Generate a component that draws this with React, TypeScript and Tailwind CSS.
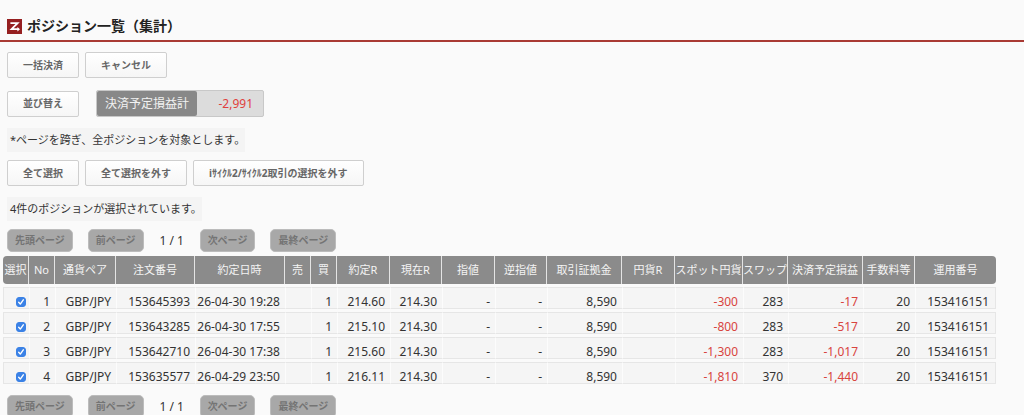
import { clsx } from 'clsx';

const columns = [
  { label: '選択', width: 'w-[26px]' },
  { label: 'No', width: 'w-[26px]' },
  { label: '通貨ペア', width: 'w-[61px]' },
  { label: '注文番号', width: 'w-[79px]' },
  { label: '約定日時', width: 'w-[90px]' },
  { label: '売', width: 'w-[26px]' },
  { label: '買', width: 'w-[26px]' },
  { label: '約定R', width: 'w-[53px]' },
  { label: '現在R', width: 'w-[52px]' },
  { label: '指値', width: 'w-[53px]' },
  { label: '逆指値', width: 'w-[52px]' },
  { label: '取引証拠金', width: 'w-[75px]' },
  { label: '円貨R', width: 'w-[53px]' },
  { label: 'スポット円貨', width: 'w-[68px]' },
  { label: 'スワップ', width: 'w-[45px]' },
  { label: '決済予定損益', width: 'w-[75px]' },
  { label: '手数料等', width: 'w-[52px]' },
  { label: '運用番号', width: 'w-[81px]' },
];

const positions = [
  ['1', 'GBP/JPY', '153645393', '26-04-30 19:28', '', '1', '214.60', '214.30', '-', '-', '8,590', '', '-300', '283', '-17', '20', '153416151'],
  ['2', 'GBP/JPY', '153643285', '26-04-30 17:55', '', '1', '215.10', '214.30', '-', '-', '8,590', '', '-800', '283', '-517', '20', '153416151'],
  ['3', 'GBP/JPY', '153642710', '26-04-30 17:38', '', '1', '215.60', '214.30', '-', '-', '8,590', '', '-1,300', '283', '-1,017', '20', '153416151'],
  ['4', 'GBP/JPY', '153635577', '26-04-29 23:50', '', '1', '216.11', '214.30', '-', '-', '8,590', '', '-1,810', '370', '-1,440', '20', '153416151'],
];

function Button({ children }: { children: string }) {
  return (
    <button
      type="button"
      className="h-[26px] rounded-xs border border-[#cfcfcf] bg-linear-to-b from-white to-[#f6f6f6] px-[15px] text-[10px] font-bold whitespace-nowrap text-[#666]"
    >
      {children}
    </button>
  );
}

function PageButton({ children }: { children: string }) {
  return (
    <button
      type="button"
      disabled
      className="h-[23px] rounded-[5px] border border-[#bcbcbc] bg-[#a8a8a8] px-[7px] text-[10px] font-bold whitespace-nowrap text-[#747474]"
    >
      {children}
    </button>
  );
}

function Pagination() {
  return (
    <nav className="flex items-center pl-[7px]">
      <div className="flex gap-[15px]">
        <PageButton>先頭ページ</PageButton>
        <PageButton>前ページ</PageButton>
      </div>
      <span className="w-14 text-center text-xs text-[#333]">1 / 1</span>
      <div className="flex gap-[15px]">
        <PageButton>次ページ</PageButton>
        <PageButton>最終ページ</PageButton>
      </div>
    </nav>
  );
}

function Checkbox({ label }: { label: string }) {
  return (
    <label className="ml-auto grid size-[10px]">
      <input
        type="checkbox"
        defaultChecked
        aria-label={label}
        className="peer col-start-1 row-start-1 size-[10px] appearance-none rounded-[3px] border border-[#aaa] bg-white checked:border-[#3b82e6] checked:bg-[#3b82e6]"
      />
      <svg
        viewBox="0 0 10 10"
        className="pointer-events-none col-start-1 row-start-1 hidden size-[10px] peer-checked:block"
        fill="none"
        stroke="#fff"
        strokeWidth="1.4"
        strokeLinecap="round"
        strokeLinejoin="round"
      >
        <path d="M2.7 5.3 4.3 7.1 7.3 2.8" />
      </svg>
    </label>
  );
}

function PositionTable() {
  return (
    <div className="pt-px pr-7 pl-[3px]">
      <table className="w-full table-fixed border-separate border-spacing-x-0 border-spacing-y-[3px] text-xs leading-3">
        <thead>
          <tr>
            {columns.map((column) => (
              <th
                key={column.label}
                className={clsx(
                  'h-7 border-r border-[#e4e4e4] bg-[#8b8b8b] p-0 text-center text-[11px] font-normal whitespace-nowrap text-[#f4f4f4] first:rounded-l-sm last:rounded-r-sm last:border-r-0',
                  column.width,
                )}
              >
                {column.label}
              </th>
            ))}
          </tr>
        </thead>
        <tbody>
          {positions.map((cells) => (
            <tr key={cells[0]}>
              <td className="h-[22px] border-y border-l border-[#e6e6e6] bg-[#f5f5f5] pt-2 pr-[3px] pb-0">
                <Checkbox label={`No ${cells[0]} を選択`} />
              </td>
              {cells.map((cell, i) => (
                <td
                  key={i}
                  className={clsx(
                    'h-[22px] border-y border-l border-y-[#e6e6e6] border-l-[#fcfcfc] bg-[#f5f5f5] pt-2 pr-[5px] pb-0 text-right whitespace-nowrap last:border-r last:border-r-[#e6e6e6] last:pr-1.5',
                    /^-\d/.test(cell) ? 'text-[#d8443e]' : 'text-[#333]',
                  )}
                >
                  {cell}
                </td>
              ))}
            </tr>
          ))}
        </tbody>
      </table>
    </div>
  );
}

export default function App() {
  return (
    <main className="min-h-screen bg-[#fafafa] font-['Noto_Sans','Noto_Sans_CJK_JP',sans-serif] text-[#333]">
      <header className="flex items-center gap-[5px] border-b-2 border-[#a93a34] px-[7px] pt-4 pb-1">
        <svg viewBox="0 0 15 15" className="size-[15px]" aria-hidden="true">
          <rect width="15" height="15" fill="#951f20" />
          <path
            d="M3.4 4.2H10.6L4.6 10.2H11.5"
            fill="none"
            stroke="#fff"
            strokeWidth="1.8"
          />
          <path d="M10.4 8 13 10.2 10.4 12.4Z" fill="#fff" />
        </svg>
        <h1 className="text-sm font-bold text-[#222]">
          ポジション一覧（集計）
        </h1>
      </header>

      <div className="flex gap-1.5 pt-2.5 pl-[7px]">
        <Button>一括決済</Button>
        <Button>キャンセル</Button>
      </div>

      <div className="flex items-center gap-[17px] pt-3 pl-[7px]">
        <Button>並び替え</Button>
        <dl className="flex h-[27px] items-center rounded-xs border border-[#c8c8c8] bg-[#dcdcdc]">
          <dt className="flex h-full items-center rounded-xs bg-[#888] px-2 text-xs text-[#f2f2f2]">
            決済予定損益計
          </dt>
          <dd className="w-[66px] pr-2.5 text-right text-xs text-[#e0403c]">
            -2,991
          </dd>
        </dl>
      </div>

      <div className="flex pt-[11px] pl-[7px]">
        <p className="bg-[#f4f4f4] pl-[3px] text-[11px] leading-6">
          *ページを跨ぎ、全ポジションを対象とします。
        </p>
      </div>

      <div className="flex gap-1.5 pt-2 pl-[7px]">
        <Button>全て選択</Button>
        <Button>全て選択を外す</Button>
        <Button>iｻｲｸﾙ2/ｻｲｸﾙ2取引の選択を外す</Button>
      </div>

      <div className="flex pt-[11px] pb-2 pl-[7px]">
        <p className="bg-[#f4f4f4] pl-[3px] text-[11px] leading-6">
          4件のポジションが選択されています。
        </p>
      </div>

      <Pagination />
      <PositionTable />
      <div className="overflow-hidden pt-2">
        <Pagination />
      </div>
    </main>
  );
}
